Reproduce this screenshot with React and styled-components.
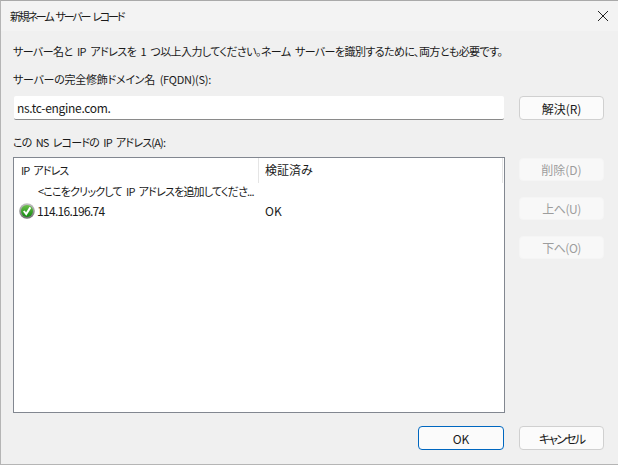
import styled, { createGlobalStyle } from "styled-components"

const Global = createGlobalStyle`
    html, body {
        margin: 0;
        padding: 0;
        background: #f0f0f0;
    }
    body {
        font-family: "Noto Sans CJK JP", "Liberation Sans", sans-serif;
        font-size: 12px;
        font-feature-settings: "palt";
        color: #1a1a1a;
    }
`
const Dialog = styled.div`
    width: 618px;
    height: 465px;
    box-sizing: border-box;
    border-top: 1px solid #a9a9a9;
    border-left: 1px solid #b5b5b5;
    border-bottom: 1px solid #b5b5b5;
    display: flex;
    flex-direction: column;
    overflow: hidden;
`
const TitleBar = styled.div`
    height: 30px;
    flex: none;
    display: flex;
    align-items: center;
    justify-content: space-between;
    padding: 0 10px 0 9px;
    background: #f3f3f3;
`
const Title = styled.span`
    font-size: 11px;
    letter-spacing: -2.2px;
    word-spacing: 3px;
`
const Body = styled.div`
    flex: 1;
    display: flex;
    flex-direction: column;
    padding: 11px 13px 0 12px;
    background: #f0f0f0;
`
const Text = styled.div`
    height: 18px;
    line-height: 18px;
    margin-top: ${(p) => p.$top || 0}px;
    margin-bottom: ${(p) => p.$gap}px;
    font-size: 11px;
    letter-spacing: ${(p) => p.$ls}px;
    word-spacing: 2.5px;
    white-space: nowrap;
`
const Row = styled.div`
    display: flex;
    justify-content: space-between;
    width: 591px;
`
const Field = styled.input`
    width: 490px;
    height: 24px;
    margin-left: 1px;
    box-sizing: border-box;
    border: none;
    border-bottom: 1px solid #8a8a8a;
    border-radius: 2px;
    background: #fff;
    padding: 0 3px;
    font: inherit;
    letter-spacing: -0.3px;
    color: #1a1a1a;
    outline: none;
`
const Button = styled.button`
    width: ${(p) => (p.$wide ? 86 : 85)}px;
    height: ${(p) => p.$h || 24}px;
    box-sizing: border-box;
    border: 1px solid ${(p) => (p.$primary ? "#0067c0" : p.disabled ? "#f5f5f5" : "#d0d0d0")};
    border-radius: 4px;
    background: ${(p) => (p.disabled ? "#f8f8f8" : "#fbfbfb")};
    color: ${(p) => (p.disabled ? "#9d9d9d" : "#1a1a1a")};
    font: inherit;
    letter-spacing: ${(p) => p.$ls || 0}px;
    padding: 0;
`
const Main = styled.div`
    display: flex;
    justify-content: space-between;
    width: 591px;
    height: 256px;
`
const List = styled.div`
    width: 492px;
    box-sizing: border-box;
    border: 1px solid #828790;
    background: #fff;
`
const ListHead = styled.div`
    display: grid;
    grid-template-columns: 245px 244px 1fr;
    height: 25px;
`
const HeadCell = styled.div`
    padding-left: ${(p) => p.$pad}px;
    line-height: 24px;
    font-size: ${(p) => p.$size || 12}px;
    letter-spacing: ${(p) => p.$ls || 0}px;
    word-spacing: 2.5px;
    border-right: 1px solid #e5e5e5;
`
const ListRow = styled.div`
    display: grid;
    grid-template-columns: 245px 1fr;
    height: 19px;
    line-height: 19px;
    margin-top: -1px;
    margin-bottom: 1px;
`
const Cell = styled.div`
    display: flex;
    align-items: center;
    gap: 2px;
    padding-left: ${(p) => p.$pad}px;
    font-size: ${(p) => p.$size || 12}px;
    letter-spacing: ${(p) => p.$ls || 0}px;
    word-spacing: 2.5px;
    white-space: nowrap;
`
const Side = styled.div`
    display: flex;
    flex-direction: column;
    gap: 16px;
    padding-top: 1px;
`
const Footer = styled.div`
    display: flex;
    justify-content: flex-end;
    gap: 15px;
    width: 591px;
    margin-top: 13px;
`

function CheckIcon() {
    return (
        <svg width="16" height="16" viewBox="0 0 16 16">
            <defs>
                <linearGradient id="ring" x1="0" y1="0" x2="0" y2="1">
                    <stop offset="0" stopColor="#c4c4c4" />
                    <stop offset="1" stopColor="#6f6f6f" />
                </linearGradient>
                <linearGradient id="ball" x1="0" y1="0" x2="0" y2="1">
                    <stop offset="0" stopColor="#6cc04a" />
                    <stop offset="1" stopColor="#128a12" />
                </linearGradient>
            </defs>
            <circle cx="8" cy="8" r="7.8" fill="url(#ring)" />
            <circle cx="8" cy="8" r="6" fill="url(#ball)" />
            <path d="M4.8 8 L7.2 11 L11.4 4.4" fill="none" stroke="#fff" strokeWidth="2" />
        </svg>
    )
}

function CloseIcon() {
    return (
        <svg width="10" height="10" viewBox="0 0 10 10">
            <path d="M0 0 L10 10 M10 0 L0 10" stroke="#222" strokeWidth="1" />
        </svg>
    )
}

function App() {
    return (
        <Dialog>
            <Global />
            <TitleBar>
                <Title>新規ネーム サーバー レコード</Title>
                <CloseIcon />
            </TitleBar>
            <Body>
                <Text $gap={10} $ls={-0.58}>サーバー名と IP アドレスを 1 つ以上入力してください。ネーム サーバーを識別するために、両方とも必要です。</Text>
                <Text $gap={8} $ls={-0.27}>サーバーの完全修飾ドメイン名 (FQDN)(S):</Text>
                <Row>
                    <Field defaultValue="ns.tc-engine.com." />
                    <Button>解決(R)</Button>
                </Row>
                <Text $top={13} $gap={6} $ls={-0.8}>この NS レコードの IP アドレス(A):</Text>
                <Main>
                    <List>
                        <ListHead>
                            <HeadCell $pad={7} $size={11} $ls={-0.9}>IP アドレス</HeadCell>
                            <HeadCell $pad={6}>検証済み</HeadCell>
                        </ListHead>
                        <ListRow>
                            <Cell $pad={24} $size={11} $ls={-0.8}>&lt;ここをクリックして IP アドレスを追加してくださ...</Cell>
                        </ListRow>
                        <ListRow>
                            <Cell $pad={5} $ls={-0.7}><CheckIcon />114.16.196.74</Cell>
                            <Cell $pad={6}>OK</Cell>
                        </ListRow>
                    </List>
                    <Side>
                        <Button disabled $h={23}>削除(D)</Button>
                        <Button disabled $h={23} $ls={-0.5}>上へ(U)</Button>
                        <Button disabled $h={23} $ls={-0.5}>下へ(O)</Button>
                    </Side>
                </Main>
                <Footer>
                    <Button $primary $wide>OK</Button>
                    <Button $ls={-1.8}>キャンセル</Button>
                </Footer>
            </Body>
        </Dialog>
    )
}

export default App
